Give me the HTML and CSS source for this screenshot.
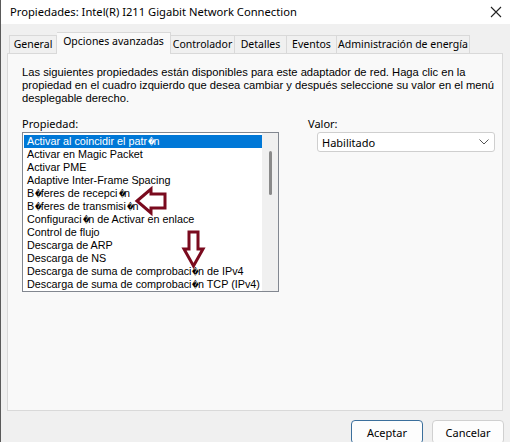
FILE: index.html
```html
<!DOCTYPE html>
<html>

<head>
  <meta charset="utf-8">
  <link rel="stylesheet" href="styles.css">
</head>

<body>
  <div class="window">
    <div class="titlebar">
      <span class="title">Propiedades: Intel(R) I211 Gigabit Network Connection</span>
      <svg class="close" width="12" height="12" viewBox="0 0 12 12">
        <path d="M1 1 L11 11 M11 1 L1 11" stroke="#222" stroke-width="1.1" fill="none"/>
      </svg>
    </div>

    <div class="tabs">
      <div class="tab t-general">General</div>
      <div class="tab active t-avanz">Opciones avanzadas</div>
      <div class="tab t-ctrl">Controlador</div>
      <div class="tab t-det">Detalles</div>
      <div class="tab t-ev">Eventos</div>
      <div class="tab t-adm">Administración de energía</div>
    </div>

    <div class="panel">
      <p class="desc">Las siguientes propiedades están disponibles para este adaptador de red. Haga clic en la propiedad en el cuadro izquierdo que desea cambiar y después seleccione su valor en el menú desplegable derecho.</p>

      <div class="fields">
        <div class="prop">
          <div class="label">Propiedad:</div>
          <div class="listbox">
            <ul class="items">
              <li class="selected">Activar al coincidir el patr<span class="rc">�</span>n</li>
              <li>Activar en Magic Packet</li>
              <li>Activar PME</li>
              <li>Adaptive Inter-Frame Spacing</li>
              <li>B<span class="rc">�</span>feres de recepci<span class="rc">�</span>n</li>
              <li>B<span class="rc">�</span>feres de transmisi<span class="rc">�</span>n</li>
              <li>Configuraci<span class="rc">�</span>n de Activar en enlace</li>
              <li>Control de flujo</li>
              <li>Descarga de ARP</li>
              <li>Descarga de NS</li>
              <li>Descarga de suma de comprobaci<span class="rc">�</span>n de IPv4</li>
              <li>Descarga de suma de comprobaci<span class="rc">�</span>n TCP (IPv4)</li>
            </ul>
            <div class="scrollbar"><div class="thumb"></div></div>
          </div>
        </div>

        <div class="val">
          <div class="label">Valor:</div>
          <div class="select">
            <span>Habilitado</span>
            <svg width="10" height="6" viewBox="0 0 10 6">
              <path d="M0.5 0.5 L5 5 L9.5 0.5" stroke="#555" stroke-width="1" fill="none"/>
            </svg>
          </div>
        </div>
      </div>
    </div>

    <div class="buttons">
      <button class="btn default">Aceptar</button>
      <button class="btn">Cancelar</button>
    </div>
  </div>

  <!-- flechas rojas dibujadas encima de la captura -->
  <svg class="arrows" width="510" height="442" viewBox="0 0 510 442">
    <polygon points="137,201 151,189 151,194 165,194 165,208 151,208 151,213" fill="none" stroke="#7a0a1e" stroke-width="3" stroke-linejoin="miter"/>
    <polygon points="189,232 198,232 198,249 203,249 193.5,266 184,249 189,249" fill="none" stroke="#7a0a1e" stroke-width="3" stroke-linejoin="miter"/>
  </svg>
</body>

</html>
```

FILE: styles.css
```css
* {
  box-sizing: border-box;
}

body {
  margin: 0;
  width: 510px;
  height: 442px;
  overflow: hidden;
  position: relative;
  background: #f0f0f0;
  font-family: "Noto Sans", "Liberation Sans", sans-serif;
  color: #000;
}

.window {
  height: 442px;
  border-left: 1px solid #5a5a5a;
}

.titlebar {
  height: 24px;
  background: #fff;
  display: flex;
  align-items: center;
  justify-content: space-between;
  padding: 0 8px 0 9px;
}

.title {
  font-size: 11.2px;
  margin-top: -1px;
}

.close {
  margin-top: -1px;
}

.tabs {
  display: flex;
  align-items: flex-end;
  height: 29px;
  padding-left: 8px;
  font-size: 10.5px;
  white-space: nowrap;
}

.tab {
  height: 18px;
  border: 1px solid #d9d9d9;
  border-bottom: none;
  border-left: none;
  background: #f0f0f0;
  text-align: center;
  line-height: 16px;
}

.t-general { width: 48px; border-left: 1px solid #d9d9d9; }
.t-avanz { width: 114px; }
.t-ctrl { width: 64px; }
.t-det { width: 52px; }
.t-ev { width: 50px; }
.t-adm { width: 133px; }

.tab.active {
  height: 22px;
  margin-bottom: -1px;
  background: #f9f9f9;
  line-height: 17px;
  position: relative;
  z-index: 1;
}

.panel {
  margin-left: 6px;
  width: 496px;
  height: 358px;
  background: #f9f9f9;
  border: 1px solid #d9d9d9;
  padding: 12px 4px 0 14px;
}

.desc {
  margin: 0;
  font-family: "Liberation Sans", Arial, sans-serif;
  font-size: 11.2px;
  line-height: 13px;
}

.fields {
  display: flex;
  margin-top: 12px;
}

.label {
  font-size: 11px;
  height: 15px;
  line-height: 13px;
}

.listbox {
  width: 257px;
  height: 160px;
  border: 1px solid #828790;
  background: #fff;
  display: flex;
  padding: 2px 0 0 1px;
}

.items {
  list-style: none;
  margin: 0;
  padding: 0;
  flex: 1;
  overflow: hidden;
  font-family: "Liberation Sans", Arial, sans-serif;
  font-size: 10.8px;
}

.items li {
  height: 13px;
  line-height: 13px;
  padding-left: 3px;
  white-space: nowrap;
}

.items li.selected {
  background: #0078d7;
  color: #fff;
}

/* el carácter de reemplazo, estrecho como en la captura */
.rc {
  display: inline-block;
  width: 6.5px;
  font-family: "DejaVu Sans", sans-serif;
  font-size: 9px;
  line-height: 13px;
  text-align: center;
  transform: scaleX(0.72);
}

.scrollbar {
  width: 16px;
  margin-top: -2px;
  background: #f0f0f0;
  display: flex;
  justify-content: center;
  padding-top: 18px;
}

.thumb {
  width: 3px;
  height: 44px;
  background: #8a8a8a;
  border-radius: 2px;
}

.val {
  margin-left: 29px;
}

.select {
  margin-left: 9px;
  width: 178px;
  height: 20px;
  border: 1px solid #cfcfcf;
  border-radius: 3px;
  background: #fff;
  display: flex;
  align-items: center;
  justify-content: space-between;
  padding: 0 5px 0 4px;
  font-size: 11px;
}

.buttons {
  display: flex;
  justify-content: flex-end;
  gap: 9px;
  padding: 9px 6px 0 0;
}

.btn {
  width: 72px;
  height: 24px;
  font-family: "Noto Sans", "Liberation Sans", sans-serif;
  font-size: 11px;
  background: #fdfdfd;
  border: 1px solid #d0d0d0;
  border-radius: 4px;
  padding: 0;
  color: #000;
}

.btn.default {
  border-color: #3b6f9c;
}

.arrows {
  position: absolute;
  left: 0;
  top: 0;
  pointer-events: none;
}
```
